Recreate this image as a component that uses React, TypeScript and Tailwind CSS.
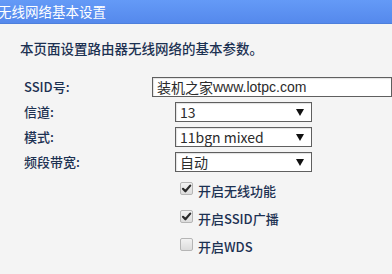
const cjk = '"Noto Sans CJK SC", "Liberation Sans", sans-serif';

const Select = ({ value }: { value: string }) => (
  <div className="relative flex h-[20px] w-[137px] items-center border border-[#5f5f5f] bg-white pl-[4px] text-[14px] text-[#2b2b2b] shadow-[inset_1px_1px_1px_rgba(0,0,0,0.12)]">
    <span className="leading-none">{value}</span>
    <span className="absolute right-[7px] top-[6px] h-0 w-0 border-l-[4px] border-r-[4px] border-t-[7px] border-l-transparent border-r-transparent border-t-[#111]"></span>
  </div>
);

const Check = ({ checked, label }: { checked: boolean; label: string }) => (
  <div className="flex h-[13px] items-center gap-[5px]">
    <div className="relative h-[13px] w-[13px] rounded-[2px] border border-[#b5b5b5] bg-gradient-to-b from-[#f2f2f2] to-[#dcdcdc]">
      {checked && (
        <svg viewBox="0 0 13 13" className="absolute left-[-1px] top-[-1px] h-[13px] w-[13px]">
          <path d="M3 6.8 L5.4 9.3 L10.2 3.6" fill="none" stroke="#2a2a2a" strokeWidth="2.2" strokeLinecap="round" strokeLinejoin="round" />
        </svg>
      )}
    </div>
    <span className="mt-[3px] text-[13px] font-medium leading-none text-[#1c3152]">{label}</span>
  </div>
);

export default function App() {
  return (
    <div className="h-[274px] w-[392px] overflow-hidden bg-[#f4f4f4]" style={{ fontFamily: cjk }}>
      <div className="flex h-[24px] items-center border-b border-[#4d7fdc] bg-gradient-to-b from-[#649af7] to-[#5589ec]">
        <span className="ml-[-2px] text-[13.5px] leading-none text-white">无线网络基本设置</span>
      </div>
      <p className="mt-[17px] pl-[20px] text-[13.5px] font-medium leading-[14px] text-[#1c3152]">本页面设置路由器无线网络的基本参数。</p>
      <div className="mt-[22px] flex flex-col gap-[5px] pl-[24px]">
        <div className="flex h-[20px] items-center">
          <span className="w-[151px] text-[13px] font-medium text-[#1c3152]">SSID号:</span>
          <div className="flex h-[20px] w-[240px] shrink-0 items-center border border-[#5f5f5f] bg-white pl-[4px] text-[14px] text-[#2b2b2b] shadow-[inset_1px_1px_1px_rgba(0,0,0,0.12)]">
            装机之家<span style={{ fontFamily: '"Liberation Sans", sans-serif' }}>www.lotpc.com</span>
          </div>
        </div>
        <div className="flex h-[20px] items-center">
          <span className="w-[151px] text-[13px] font-medium text-[#1c3152]">信道:</span>
          <Select value="13" />
        </div>
        <div className="flex h-[20px] items-center">
          <span className="w-[151px] text-[13px] font-medium text-[#1c3152]">模式:</span>
          <Select value="11bgn mixed" />
        </div>
        <div className="flex h-[20px] items-center">
          <span className="w-[151px] text-[13px] font-medium text-[#1c3152]">频段带宽:</span>
          <Select value="自动" />
        </div>
      </div>
      <div className="mt-[10px] flex flex-col gap-[15px] pl-[180px]">
        <Check checked label="开启无线功能" />
        <Check checked label="开启SSID广播" />
        <Check checked={false} label="开启WDS" />
      </div>
    </div>
  );
}
